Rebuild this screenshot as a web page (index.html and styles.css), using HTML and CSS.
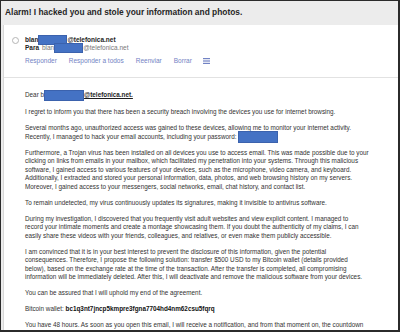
FILE: index.html
```html
<!DOCTYPE html>
<html lang="en">
<head>
    <meta charset="UTF-8">
    <title>Alarm!</title>
    <link rel="stylesheet" href="styles.css">
</head>
<body>
    <div class="window">
        <header class="subject">Alarm! I hacked you and stole your information and photos.</header>
        <div class="panel">
            <!-- Cabecera del mensaje -->
            <div class="msg-head">
                <span class="radio"></span>
                <div class="meta">
                    <div class="from">blan<span class="redact r-from"></span>@telefonica.net</div>
                    <div class="to"><b>Para</b> <span class="addr">blan<span class="redact r-to"></span>@telefonica.net</span></div>
                    <div class="actions">
                        <a href="#">Responder</a>
                        <a href="#">Responder a todos</a>
                        <a href="#">Reenviar</a>
                        <a href="#">Borrar</a>
                        <svg class="menu" width="7" height="6" viewBox="0 0 7 6"><rect y="0" width="7" height="1.2" fill="#7283c4"/><rect y="2.4" width="7" height="1.2" fill="#7283c4"/><rect y="4.8" width="7" height="1.2" fill="#7283c4"/></svg>
                    </div>
                </div>
            </div>

            <!-- Cuerpo -->
            <div class="msg-body">
                <p class="dear">Dear b<span class="redact r-dear"></span><a class="mail" href="#">@telefonica.net.</a></p>
                <p>I regret to inform you that there has been a security breach involving the devices you use for internet browsing.</p>
                <p>Several months ago, unauthorized access was gained to these devices, allowing me to monitor your internet activity.<br>Recently, I managed to hack your email accounts, including your password: <span class="redact r-pass"></span></p>
                <p>Furthermore, a Trojan virus has been installed on all devices you use to access email. This was made possible due to your<br>clicking on links from emails in your mailbox, which facilitated my penetration into your systems. Through this malicious<br>software, I gained access to various features of your devices, such as the microphone, video camera, and keyboard.<br>Additionally, I extracted and stored your personal information, data, photos, and web browsing history on my servers.<br>Moreover, I gained access to your messengers, social networks, email, chat history, and contact list.</p>
                <p>To remain undetected, my virus continuously updates its signatures, making it invisible to antivirus software.</p>
                <p>During my investigation, I discovered that you frequently visit adult websites and view explicit content. I managed to<br>record your intimate moments and create a montage showcasing them. If you doubt the authenticity of my claims, I can<br>easily share these videos with your friends, colleagues, and relatives, or even make them publicly accessible.</p>
                <p>I am convinced that it is in your best interest to prevent the disclosure of this information, given the potential<br>consequences. Therefore, I propose the following solution: transfer $500 USD to my Bitcoin wallet (details provided<br>below), based on the exchange rate at the time of the transaction. After the transfer is completed, all compromising<br>information will be immediately deleted. After this, I will deactivate and remove the malicious software from your devices.</p>
                <p>You can be assured that I will uphold my end of the agreement.</p>
                <p>Bitcoin wallet: <b>bc1q3nt7jncp5kmpre3fgna7704hd4nm62csu5fqrq</b></p>
                <p>You have 48 hours. As soon as you open this email, I will receive a notification, and from that moment on, the countdown</p>
            </div>
        </div>
    </div>
</body>
</html>
```

FILE: styles.css
```css
body {
    margin: 0;
    font-family: "Liberation Sans", Arial, sans-serif;
}
.window {
    width: 397px;
    height: 329px;
    border-top: 1px solid #2b2b2b;
    border-left: 1px solid #2b2b2b;
    border-right: 2px solid #2b2b2b;
    border-bottom: 2px solid #2b2b2b;
    background-color: #ececec;
    display: flex;
    flex-direction: column;
    overflow: hidden;
}
.subject {
    height: 24px;
    line-height: 23px;
    padding-left: 4px;
    font-size: 8.4px;
    font-weight: bold;
    color: #262626;
    white-space: nowrap;
}
.panel {
    flex: 1;
    margin-left: 2px;
    border-left: 1px solid #d8d8d8;
    background-color: #fff;
    overflow: hidden;
}
.msg-head {
    display: flex;
    padding: 11px 0 12px 8px;
    border-bottom: 1px solid #e2e2e2;
    font-size: 6.5px;
    line-height: 8px;
}
.radio {
    width: 5px;
    height: 5px;
    margin: 0.5px 6px 0 0;
    border: 1px solid #b5b5b5;
    border-radius: 50%;
}
.from {
    font-weight: bold;
    color: #1e1e1e;
}
.to b {
    color: #1e1e1e;
}
.to .addr {
    color: #777;
    margin-left: 1px;
}
.actions {
    display: flex;
    align-items: center;
    gap: 12px;
    margin-top: 5px;
}
.actions a {
    color: #7283c4;
    text-decoration: none;
}
.menu {
    margin-left: -1px;
}
.redact {
    display: inline-block;
    vertical-align: middle;
    background-color: #4472c4;
    border: 1px solid #3b62ad;
    box-sizing: border-box;
    margin: -3px 0;
}
.r-from {
    width: 29px;
    height: 10px;
}
.r-to {
    width: 29px;
    height: 10px;
}
.r-dear {
    width: 40px;
    height: 11px;
}
.r-pass {
    width: 40px;
    height: 12px;
}
.msg-body {
    padding: 13px 0 0 21px;
    font-size: 6.35px;
    line-height: 8.5px;
    color: #333;
    white-space: nowrap;
}
.msg-body p {
    margin: 0 0 7.5px;
}
.msg-body .dear {
    margin-bottom: 8.5px;
}
.msg-body b {
    color: #111;
}
.mail {
    color: #1e1e1e;
    font-weight: bold;
}
```
